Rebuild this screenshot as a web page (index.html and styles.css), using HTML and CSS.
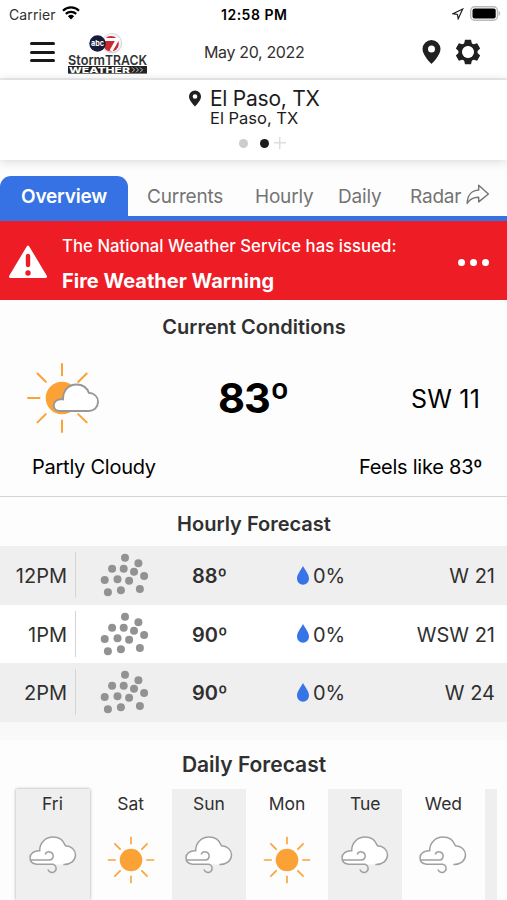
FILE: index.html
```html
<!DOCTYPE html>
<html lang="en">
<head>
    <meta charset="UTF-8">
    <title>StormTRACK Weather</title>
    <link rel="stylesheet" href="styles.css">
</head>
<body>
<svg class="icons" width="0" height="0">
    <symbol id="pin" viewBox="0 0 18 24">
        <path fill-rule="evenodd" d="M9 0a9 9 0 0 0-9 9c0 6.500 9 15 9 15s9-8.500 9-15a9 9 0 0 0-9-9zm0 5.500a3.500 3.500 0 1 1 0 7 3.500 3.500 0 0 1 0-7z"/>
    </symbol>
    <symbol id="dots" viewBox="0 0 50 46">
        <g fill="#929292">
            <circle cx="25" cy="5.700" r="4"/><circle cx="38.400" cy="11.300" r="4"/>
            <circle cx="12.100" cy="16.700" r="4"/><circle cx="23.700" cy="16.700" r="4"/>
            <circle cx="34" cy="19.700" r="4"/><circle cx="44.100" cy="24" r="4"/>
            <circle cx="4.700" cy="28" r="4"/><circle cx="17.500" cy="27.200" r="4"/>
            <circle cx="29.100" cy="28.700" r="4"/><circle cx="7.900" cy="40.200" r="4"/>
            <circle cx="20.900" cy="38.300" r="4"/><circle cx="39.900" cy="37" r="4"/>
        </g>
    </symbol>
    <symbol id="drop" viewBox="0 0 12 19">
        <path d="M6 0C8 4.200 12 8 12 12.700a6 6 0 0 1-12 0C0 8 4 4.200 6 0z" fill="#3674e8"/>
    </symbol>
    <symbol id="sun" viewBox="0 0 48 48">
        <circle cx="24" cy="24" r="11.300" fill="#fba236"/>
        <path d="M24 .8v7.500M24 39.700v7.500M.8 24h8M39.200 24h8M7.400 7.400l6.200 6.200M34.400 34.400l6.200 6.200M40.600 7.400l-6.200 6.200M13.600 34.400l-6.200 6.200" stroke="#fba236" stroke-width="1.600" fill="none"/>
    </symbol>
    <symbol id="wind" viewBox="0 0 48 38">
        <path d="M1 22C1 17.500 5 14.500 10.700 15 10.500 7 16.500 1 24 1c5.800 0 10.500 3.500 12.400 8.700 5.800 0 10.100 4.300 10.100 9.500 0 5-4.500 9-10 9.200H7C3 27.500 1 25.500 1 22z" fill="#fff"/>
        <path d="M24 28.200H7.500C3.500 27.700 1 25.300 1 21.700c0-4.200 4-7.200 9.700-6.900C10.500 7 16.500 1.100 24 1.100c5.800 0 10.500 3.500 12.400 8.700 5.800 0 10.100 4.300 10.100 9.300 0 5.400-4.600 9.600-12.200 9.300M1.500 24h19a4.100 4.100 0 1 0-4.300-5.500M24 28.200a4.200 4.200 0 1 1-5.100 5.200" fill="none" stroke="#a0a0a0" stroke-width="1.500"/>
    </symbol>
</svg>

<div class="status-bar">
    <span class="carrier">Carrier</span>
    <svg class="wifi" width="18" height="14" viewBox="0 0 18 14">
        <path d="M1 4.700a11.500 11.500 0 0 1 16 0M3.800 7.900a7.600 7.600 0 0 1 10.400 0" fill="none" stroke="#000" stroke-width="2.200"/>
        <path d="M5.900 10.200a4.600 4.600 0 0 1 6.200 0L9 13.500z"/>
    </svg>
    <span class="clock">12:58 PM</span>
    <svg class="gps" width="12" height="12" viewBox="0 0 12 12">
        <path d="M10.700 1L1 5.700l4.400.8.800 4.300z" fill="none" stroke="#222" stroke-width="1.200"/>
    </svg>
    <svg class="battery" width="31" height="15" viewBox="0 0 31 15">
        <rect x=".7" y=".7" width="26.800" height="13.600" rx="4" fill="#fff" stroke="#b9b9b9" stroke-width="1.400"/>
        <rect x="2.500" y="2.500" width="23.200" height="10" rx="2"/>
        <path d="M28.700 5v5c2-.8 2-4.200 0-5z" fill="#b9b9b9"/>
    </svg>
</div>

<div class="header">
    <div class="menu"><i></i><i></i><i></i></div>
    <svg class="logo" width="82" height="42" viewBox="0 0 82 42">
        <circle cx="45" cy="11.300" r="10.200" fill="#d3d7dd"/>
        <circle cx="44.800" cy="11" r="9.300" fill="#f4f4f4"/>
        <circle cx="44" cy="11.800" r="7.800" fill="#cb2a30"/>
        <path d="M38 7.500h12.500l-6.500 11.500" fill="none" stroke="#fff" stroke-width="3.200"/>
        <circle cx="30.500" cy="11.500" r="8.200" fill="#161c3a"/>
        <text class="logo-abc" x="30.500" y="14.300" textLength="13" lengthAdjust="spacingAndGlyphs">abc</text>
        <text class="logo-storm" x="1" y="33" textLength="37" lengthAdjust="spacingAndGlyphs">Storm</text>
        <text class="logo-storm" x="38" y="33" textLength="42" lengthAdjust="spacingAndGlyphs">TRACK</text>
        <rect x="1" y="34" width="79" height="7.600" fill="#222"/>
        <text class="logo-weather" x="2" y="40.700" textLength="61" lengthAdjust="spacingAndGlyphs">WEATHER</text>
        <path d="M65 35.400l2.500 2.500-2.500 2.500M69 35.400l2.500 2.500-2.500 2.500M73 35.400l2.500 2.500-2.500 2.500" fill="none" stroke="#ccc"/>
    </svg>
    <div class="date">May 20, 2022</div>
    <svg class="header-pin" width="19" height="24"><use href="#pin"/></svg>
    <svg class="gear" width="26" height="26" viewBox="-13 -13 26 26">
        <g fill="#202020">
            <path id="teeth" d="M-4-8l1-4.300h6L4-8V8l-1 4.300h-6L-4 8z"/>
            <use href="#teeth" transform="rotate(60)"/>
            <use href="#teeth" transform="rotate(120)"/>
        </g>
        <circle r="7.700" fill="#fff" stroke="#202020" stroke-width="3.800"/>
        <circle r="5.900" fill="#fff"/>
    </svg>
</div>

<div class="location">
    <svg class="location-pin" width="12" height="17"><use href="#pin"/></svg>
    <div class="location-text">
        <div class="city">El Paso, TX</div>
        <div class="station">El Paso, TX</div>
    </div>
    <div class="pager"><i></i><i class="on"></i><b></b></div>
</div>

<div class="tabs">
    <div class="tab active">Overview</div>
    <div class="tab currents">Currents</div>
    <div class="tab hourly-tab">Hourly</div>
    <div class="tab daily-tab">Daily</div>
    <div class="tab radar">Radar</div>
    <svg class="share" width="24" height="21" viewBox="0 0 24 21">
        <path d="M12.700 1.200l9.700 8.800-9.700 7.900v-4.600C7.500 13.200 3.800 15 1.200 19.500 1.300 11.500 5.500 6.400 12.700 6z" fill="none" stroke="#747474" stroke-width="1.400" stroke-linejoin="round"/>
    </svg>
</div>

<div class="alert">
    <svg class="warning" width="40" height="34" viewBox="0 0 40 34">
        <path d="M20 2.200L37.500 31.500h-35z" fill="#fff" stroke="#fff" stroke-width="3" stroke-linejoin="round"/>
        <path d="M20 11v9" stroke="#ee1c25" stroke-width="4.400" stroke-linecap="round"/>
        <circle cx="20" cy="28" r="2.700" fill="#ee1c25"/>
    </svg>
    <div class="alert-text">
        <div class="issued">The National Weather Service has issued:</div>
        <div class="warning-name">Fire Weather Warning</div>
    </div>
    <div class="more"><i></i><i></i><i></i></div>
</div>

<div class="current">
    <div class="title">Current Conditions</div>
    <div class="now">
        <svg class="now-icon" width="74" height="72" viewBox="0 0 74 72">
            <circle cx="36" cy="36" r="16.300" fill="#fba236"/>
            <path d="M36 2v11.300M36 58.500V70M2 36h11.500M11.500 11.500l8.300 8.300M60.700 11.500l-8.500 8.500M11.500 60.400l8.300-8.300M60.700 60.400l-8.500-8.300" fill="none" stroke="#fba236" stroke-width="2" stroke-linecap="round"/>
            <path d="M34 49c-3.800 0-6.300-2.500-6.300-5.800 0-3.500 3.500-6.600 9.300-5.800C37 28 43 22.500 50.500 22.500c6 0 10.500 3.300 12.300 8.300 5.500.5 9.200 4 9.200 9 0 5.300-4 9.200-9 9.200z" fill="#fff" stroke="#979797" stroke-width="1.900"/>
        </svg>
        <div class="temp">83º</div>
        <div class="now-wind">SW 11</div>
    </div>
    <div class="summary">
        <span class="sky">Partly Cloudy</span>
        <span class="feels">Feels like 83º</span>
    </div>
</div>

<div class="hourly">
    <div class="title">Hourly Forecast</div>
    <div class="hour gray">
        <div class="time">12PM</div>
        <svg class="sky-icon" width="50" height="46"><use href="#dots"/></svg>
        <div class="degrees">88º</div>
        <div class="rain"><svg width="12" height="19"><use href="#drop"/></svg>0%</div>
        <div class="wind">W 21</div>
    </div>
    <div class="hour">
        <div class="time">1PM</div>
        <svg class="sky-icon" width="50" height="46"><use href="#dots"/></svg>
        <div class="degrees">90º</div>
        <div class="rain"><svg width="12" height="19"><use href="#drop"/></svg>0%</div>
        <div class="wind">WSW 21</div>
    </div>
    <div class="hour gray">
        <div class="time">2PM</div>
        <svg class="sky-icon" width="50" height="46"><use href="#dots"/></svg>
        <div class="degrees">90º</div>
        <div class="rain"><svg width="12" height="19"><use href="#drop"/></svg>0%</div>
        <div class="wind">W 24</div>
    </div>
</div>

<div class="daily">
    <div class="title daily-title">Daily Forecast</div>
    <div class="days">
        <div class="day gray today">Fri<svg width="48" height="38"><use href="#wind"/></svg></div>
        <div class="day">Sat<svg width="48" height="48"><use href="#sun"/></svg></div>
        <div class="day gray">Sun<svg width="48" height="38"><use href="#wind"/></svg></div>
        <div class="day">Mon<svg width="48" height="48"><use href="#sun"/></svg></div>
        <div class="day gray">Tue<svg width="48" height="38"><use href="#wind"/></svg></div>
        <div class="day">Wed<svg width="48" height="38"><use href="#wind"/></svg></div>
        <div class="day gray"></div>
    </div>
</div>
</body>
</html>
```
FILE: styles.css
```css
* {
    box-sizing: border-box;
}

body {
    margin: 0;
    width: 507px;
    height: 900px;
    overflow: hidden;
    background-color: #fdfdfd;
    color: #303030;
    font-family: Inter, "Liberation Sans", sans-serif;
    white-space: nowrap;
}

svg {
    display: block;
    flex: none;
}

.icons {
    position: absolute;
}

.status-bar {
    display: flex;
    align-items: center;
    height: 28px;
    padding-left: 9px;
    background-color: white;
    font-size: 14px;
}

.carrier {
    width: 53px;
    letter-spacing: 0.1px;
}

.clock {
    width: 237px;
    margin-left: 141px;
    color: black;
    font-weight: 600;
    letter-spacing: 0.5px;
}

.wifi {
    margin-top: -2px;
}

.gps {
    margin-left: -6px;
}

.battery {
    margin-left: 6px;
    margin-top: -1px;
}

.header {
    display: flex;
    height: 52px;
    padding-left: 30px;
    background-color: white;
    border-bottom: 2px solid #eee;
}

.menu {
    width: 25px;
    padding-top: 14px;
}

.menu i {
    display: block;
    height: 3px;
    margin-bottom: 5.5px;
    border-radius: 2px;
    background-color: #181818;
}

.logo {
    margin: 4px 0 0 12px;
}

.logo-abc {
    fill: white;
    font-size: 8px;
    font-weight: bold;
    text-anchor: middle;
}

.logo-storm {
    fill: #333;
    font-size: 13.5px;
    font-weight: 600;
}

.logo-weather {
    fill: white;
    font-size: 8px;
    font-weight: 800;
}

.date {
    width: 218px;
    margin-left: 55px;
    font-size: 16px;
    line-height: 49px;
    letter-spacing: -0.35px;
}

.header-pin {
    margin-top: 12px;
    fill: #202020;
}

.gear {
    margin: 11px 0 0 14px;
}

.location {
    display: grid;
    grid-template-columns: 21px 1fr;
    align-content: start;
    height: 80px;
    padding: 7px 0 0 189px;
    background-color: white;
    box-shadow: 0 1px 10px rgba(0, 0, 0, 0.16);
}

.location-pin {
    margin-top: 3px;
    fill: #202020;
}

.location-text {
    color: #1c1c1c;
}

.city {
    height: 22px;
    font-size: 21px;
    line-height: 24px;
    letter-spacing: -0.25px;
}

.station {
    font-size: 16.5px;
    line-height: 18px;
    letter-spacing: 0;
}

.pager {
    grid-column: 1 / 3;
    display: flex;
    align-items: center;
    height: 12px;
    margin-top: 10px;
    padding-left: 50px;
}

.pager i {
    width: 9px;
    height: 9px;
    margin-right: 12px;
    border-radius: 50%;
    background-color: #ccc;
}

.pager .on {
    margin-right: 5px;
    background-color: #1c1c1c;
}

.pager b {
    width: 12px;
    height: 12px;
    background: linear-gradient(#ddd, #ddd) center / 12px 1.5px no-repeat,
                linear-gradient(#ddd, #ddd) center / 1.5px 12px no-repeat;
}

.tabs {
    display: flex;
    height: 61px;
    padding-top: 15.5px;
    border-bottom: 5px solid #3772e4;
}

.tab {
    color: #747474;
    font-size: 19px;
    line-height: 41px;
    letter-spacing: -0.2px;
}

.active {
    width: 128px;
    border-radius: 11px 11px 0 0;
    background-color: #3772e4;
    color: white;
    font-weight: 600;
    text-align: center;
}

.currents {
    width: 108px;
    margin-left: 19px;
}

.hourly-tab {
    width: 83px;
}

.daily-tab {
    width: 72px;
}

.radar {
    width: 56px;
}

.share {
    margin-top: 8px;
}

.alert {
    display: flex;
    align-items: center;
    height: 79px;
    padding-left: 8px;
    background-color: #ee1c25;
    color: white;
}

.warning {
    margin-top: 2px;
}

.alert-text {
    width: 396px;
    margin-left: 14px;
    padding-top: 6px;
}

.issued {
    font-size: 16.7px;
    font-weight: 500;
    line-height: 34px;
    letter-spacing: 0.05px;
}

.warning-name {
    font-size: 20px;
    font-weight: 700;
    line-height: 36px;
}

.more {
    display: flex;
    gap: 5px;
    margin-top: 4px;
}

.more i {
    width: 7px;
    height: 7px;
    border-radius: 50%;
    background-color: white;
}

.title {
    height: 50px;
    padding-left: 1px;
    font-size: 20px;
    font-weight: 600;
    line-height: 54px;
    text-align: center;
}

.current {
    height: 197px;
    border-bottom: 1px solid #d5d5d5;
    color: black;
}

.current .title {
    color: #303030;
}

.now {
    display: flex;
    height: 96px;
    padding-left: 26px;
}

.now-icon {
    margin-top: 12px;
}

.temp {
    width: 193px;
    margin-left: 118px;
    font-size: 41.5px;
    font-weight: 700;
    line-height: 96px;
    letter-spacing: -1px;
}

.now-wind {
    font-size: 25px;
    line-height: 98px;
    letter-spacing: 0.2px;
}

.summary {
    display: flex;
    justify-content: space-between;
    padding: 6px 25px 0 32px;
    font-size: 20px;
    line-height: 30px;
    letter-spacing: -0.25px;
}

.hourly {
    height: 243px;
    background: linear-gradient(#fdfdfd 220px, #f8f8f8 225px, #fafafa);
}

.hourly .title {
    height: 49px;
}

.hour {
    display: grid;
    grid-template-columns: 76px 116px 105px 90px 1fr;
    align-items: center;
    height: 58.6px;
    padding-right: 12px;
    background-color: white;
    font-size: 20px;
}

.gray {
    background-color: #efefef;
}

.time {
    height: 46px;
    padding-right: 8px;
    border-right: 1px solid #d5d5d5;
    line-height: 48px;
    text-align: right;
}

.sky-icon {
    margin-left: 24px;
}

.degrees {
    padding-top: 2px;
    font-weight: 600;
}

.rain {
    display: flex;
    align-items: center;
    gap: 4px;
    padding-top: 2px;
}

.rain svg {
    margin-top: -2px;
}

.wind {
    padding-top: 2px;
    text-align: right;
}

.daily-title {
    height: 49px;
    font-size: 21px;
    line-height: 50px;
}

.days {
    display: flex;
    height: 111px;
    padding-left: 15.5px;
    gap: 4.2px;
}

.day {
    flex: none;
    width: 74px;
    padding-top: 1px;
    font-size: 17.5px;
    line-height: 27px;
    text-align: center;
}

.day svg {
    margin: 19px 0 0 13px;
}

.today {
    box-shadow: 0 0 3px rgba(0, 0, 0, 0.35);
}

.day:last-child {
    width: 12px;
}
```
